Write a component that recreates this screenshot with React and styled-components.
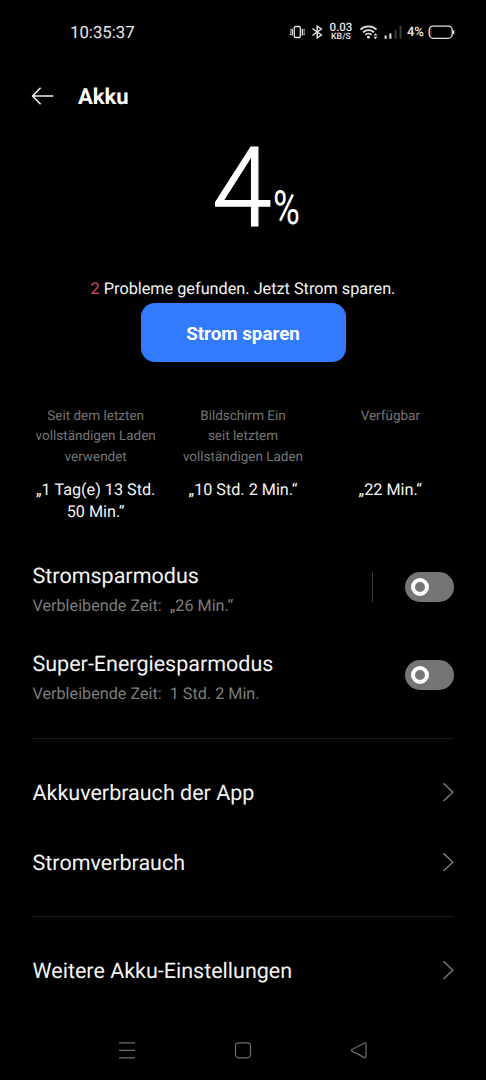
import React from 'react';
import styled, { createGlobalStyle } from 'styled-components';

const GlobalStyle = createGlobalStyle`
  * { box-sizing: border-box; }
  html, body { margin: 0; background: #000; }
  body {
    font-family: Roboto, "Liberation Sans", sans-serif;
    color: #f4f4f4;
    text-rendering: geometricPrecision;
  }
`;

const Screen = styled.div`
  width: 486px;
  height: 1080px;
  background: #000;
  display: flex;
  flex-direction: column;
  overflow: hidden;
`;

const StatusBar = styled.header`
  height: 64px;
  padding: 0 31px 0 70px;
  display: flex;
  align-items: center;
  justify-content: space-between;
`;

const Clock = styled.span`
  padding-top: 2px;
  font-size: 16.8px;
  line-height: 20px;
  color: #e8e8e8;
`;

const StatusIcons = styled.div`
  display: flex;
  align-items: center;
  svg { display: block; }
`;

const NetSpeed = styled.div`
  width: 24px;
  padding-top: 2px;
  margin: 0 6px 0 6px;
  display: flex;
  flex-direction: column;
  align-items: center;
  color: #e8e8e8;
  font-weight: 500;
  white-space: nowrap;
`;

const SpeedValue = styled.span`
  font-size: 11.5px;
  line-height: 9px;
`;

const SpeedUnit = styled.span`
  font-size: 8.8px;
  line-height: 11px;
`;

const BatteryLevel = styled.span`
  width: 18px;
  padding-top: 2px;
  margin: 0 3px 0 5px;
  font-size: 13px;
  line-height: 16px;
  font-weight: 500;
  letter-spacing: -0.2px;
  color: #e8e8e8;
`;

const TitleBar = styled.div`
  height: 64px;
  padding-left: 31px;
  display: flex;
  align-items: center;
  gap: 24px;
`;

const Title = styled.h1`
  margin: 0;
  padding-top: 3px;
  font-size: 22px;
  line-height: 28px;
  font-weight: 700;
  color: #fff;
`;

const Hero = styled.section`
  height: 234px;
  display: flex;
  flex-direction: column;
  align-items: center;
`;

const Percentage = styled.div`
  height: 146px;
  padding: 2px 0 0 35px;
  display: flex;
  align-items: baseline;
  justify-content: center;
  color: #fff;
`;

const Level = styled.span`
  font-size: 111px;
  line-height: 118px;
  font-weight: 300;
  letter-spacing: -1px;
  -webkit-text-stroke: 1.2px #fff;
  transform: scaleX(0.97);
  transform-origin: left;
`;

const PercentSign = styled.span`
  font-size: 47px;
  line-height: 48px;
  width: 36px;
  transform: translateY(-2px) scaleX(0.78);
  transform-origin: left;
`;

const Message = styled.p`
  margin: 0;
  height: 29px;
  font-size: 16.25px;
  line-height: 30px;
  white-space: nowrap;
`;

const Count = styled.span`
  color: #d04a56;
`;

const SaveButton = styled.button`
  width: 205px;
  height: 59px;
  padding: 2px 0 0;
  border: 0;
  border-radius: 14px;
  background: #327bff;
  color: #fff;
  font: 700 18.8px/24px Roboto, sans-serif;
`;

const Stats = styled.section`
  height: 181px;
  padding: 42px 22px 0;
  display: grid;
  grid-template-columns: repeat(3, 1fr);
`;

const Stat = styled.div`
  display: flex;
  flex-direction: column;
  align-items: center;
  text-align: center;
  white-space: nowrap;
`;

const StatLabel = styled.div`
  height: 75px;
  padding-top: 1.6px;
  font-size: 13.5px;
  line-height: 20.7px;
  color: #757575;
`;

const StatValue = styled.div`
  font-size: 16.2px;
  line-height: 22px;
`;

const ModeRow = styled.div`
  height: 88px;
  padding: 0 32px;
  display: flex;
  align-items: center;
`;

const ModeText = styled.div`
  flex: 1;
  padding-top: 4px;
  display: flex;
  flex-direction: column;
  gap: 2px;
`;

const RowTitle = styled.span`
  padding: 3px 0 0 0.5px;
  font-size: 21.5px;
  line-height: 28px;
  white-space: nowrap;
`;

const RowHint = styled.span`
  padding-left: 0.5px;
  font-size: 16.2px;
  line-height: 26px;
  color: #7d7d7d;
  white-space: pre;
`;

const Separator = styled.span`
  width: 1px;
  height: 30px;
  margin-right: 32px;
  background: #3a3a3a;
`;

const Toggle = styled.span`
  width: 49px;
  height: 30px;
  padding-left: 6px;
  border-radius: 15px;
  background: #757575;
  display: flex;
  align-items: center;
`;

const Knob = styled.span`
  width: 18px;
  height: 18px;
  border-radius: 50%;
  border: 4px solid #fff;
`;

const Divider = styled.hr`
  flex: none;
  width: 422px;
  height: 1px;
  margin: 19px auto 18px;
  border: 0;
  background: #1b1b1b;
`;

const LinkRow = styled.div`
  height: 70px;
  padding: 0 32px;
  display: flex;
  align-items: center;
  justify-content: space-between;
`;

const NavBar = styled.nav`
  height: 60px;
  margin-top: auto;
  padding: 0 118px;
  display: flex;
  align-items: center;
  justify-content: space-between;
`;

const VibrateIcon = () => (
  <svg width="16" height="16" viewBox="0 0 16 16" fill="none" stroke="#e4e4e4" strokeWidth="1.3">
    <rect x="5.3" y="2.5" width="6" height="11" rx="1.2" />
    <path d="M3.3 4.8v6.6M13.4 4.8v6.6M1.5 5.2v1.4M1.5 7.6v1M1.5 9.6v1.4M15.2 5.2v1.4M15.2 7.6v1M15.2 9.6v1.4" />
  </svg>
);

const BluetoothIcon = () => (
  <svg width="12" height="16" viewBox="0 0 12 16" fill="none" stroke="#e4e4e4" strokeWidth="1.4">
    <path d="M1.4 4.5 10.4 11 6.2 14V2l4.2 3-9 6.5" />
  </svg>
);

const WifiIcon = () => (
  <svg width="20" height="16" viewBox="0 0 20 16" fill="none" stroke="#e4e4e4" strokeWidth="1.7">
    <path d="M1.5 5.6a11.6 11.6 0 0 1 16 0M3.9 8.4a8.1 8.1 0 0 1 11.2 0M6.3 11a4.6 4.6 0 0 1 6.2-.2" />
    <circle cx="9.4" cy="13.2" r="1.4" fill="#e4e4e4" stroke="none" />
    <path d="M14.4 11.6l2-2.4 2 2.4zM14.4 12.8l2 2.4 2-2.4z" fill="#e4e4e4" stroke="none" />
  </svg>
);

const SignalIcon = () => (
  <svg width="19" height="16" viewBox="0 0 19 16" fill="none" strokeWidth="2">
    <path d="M2.6 14.8v-3.4M7.4 14.8V9.4" stroke="#e4e4e4" />
    <path d="M12.6 14.8V6M17.6 14.8V2" stroke="#3d3d3d" />
  </svg>
);

const BatteryIcon = () => (
  <svg width="27" height="16" viewBox="0 0 27 16" fill="none">
    <path d="M2.8 4.5v7.4" stroke="#7c3038" strokeWidth="1.2" />
    <rect x="1.2" y="2.1" width="23" height="12.2" rx="4" stroke="#e4e4e4" strokeWidth="1.3" />
    <path d="M25.7 6.2v4" stroke="#e4e4e4" strokeWidth="1.3" />
  </svg>
);

const BackIcon = () => (
  <svg width="23" height="20" viewBox="0 0 23 20" fill="none" stroke="#f0f0f0" strokeWidth="1.6">
    <path d="M22.3 10H1.8M9.6 1.8 1.6 10l8 8.2" />
  </svg>
);

const ChevronIcon = () => (
  <svg width="13" height="20" viewBox="0 0 13 20" fill="none" stroke="#787878" strokeWidth="1.5">
    <path d="M2.5 1.4 11.8 10.2 2.5 19" />
  </svg>
);

const MenuIcon = () => (
  <svg width="18" height="18" viewBox="0 0 18 18" stroke="#6c6c6c" strokeWidth="1.2">
    <path d="M1 1.9h16M1 9.4h16M1 16.9h16" />
  </svg>
);

const HomeIcon = () => (
  <svg width="18" height="18" viewBox="0 0 18 18" fill="none" stroke="#6c6c6c" strokeWidth="1.2">
    <rect x="1.5" y="1.8" width="15" height="15" rx="3.2" />
  </svg>
);

const PreviousIcon = () => (
  <svg width="18" height="18" viewBox="0 0 18 18" fill="none" stroke="#6c6c6c" strokeWidth="1.2" strokeLinejoin="round">
    <path d="M2 8.5 14.6 2Q16 1.5 16 2.9v12.8q0 1.4-1.4.9L2 10.1Q.9 9.3 2 8.5z" />
  </svg>
);

const stats = [
  { label: ['Seit dem letzten', 'vollständigen Laden', 'verwendet'], value: ['„1 Tag(e) 13 Std.', '50 Min.“'] },
  { label: ['Bildschirm Ein', 'seit letztem', 'vollständigen Laden'], value: ['„10 Std. 2 Min.“'] },
  { label: ['Verfügbar'], value: ['„22 Min.“'] },
];

const Lines = ({ items }) => items.map((line) => <div key={line}>{line}</div>);

const Mode = ({ title, hint, separated }) => (
  <ModeRow>
    <ModeText>
      <RowTitle>{title}</RowTitle>
      <RowHint>{hint}</RowHint>
    </ModeText>
    {separated && <Separator />}
    <Toggle role="switch" aria-checked="false"><Knob /></Toggle>
  </ModeRow>
);

const Link = ({ title }) => (
  <LinkRow>
    <RowTitle>{title}</RowTitle>
    <ChevronIcon />
  </LinkRow>
);

const IconGap = styled.span`
  width: ${(p) => p.$size}px;
`;

export default function App() {
  return (
    <>
      <GlobalStyle />
      <Screen>
        <StatusBar>
          <Clock>10:35:37</Clock>
          <StatusIcons>
            <VibrateIcon />
            <IconGap $size={6} />
            <BluetoothIcon />
            <NetSpeed>
              <SpeedValue>0.03</SpeedValue>
              <SpeedUnit>KB/S</SpeedUnit>
            </NetSpeed>
            <WifiIcon />
            <IconGap $size={4} />
            <SignalIcon />
            <BatteryLevel>4%</BatteryLevel>
            <BatteryIcon />
          </StatusIcons>
        </StatusBar>
        <TitleBar>
          <BackIcon />
          <Title>Akku</Title>
        </TitleBar>
        <Hero>
          <Percentage>
            <Level>4</Level>
            <PercentSign>%</PercentSign>
          </Percentage>
          <Message><Count>2</Count> Probleme gefunden. Jetzt Strom sparen.</Message>
          <SaveButton>Strom sparen</SaveButton>
        </Hero>
        <Stats>
          {stats.map((s) => (
            <Stat key={s.label[0]}>
              <StatLabel><Lines items={s.label} /></StatLabel>
              <StatValue><Lines items={s.value} /></StatValue>
            </Stat>
          ))}
        </Stats>
        <Mode title="Stromsparmodus" hint="Verbleibende Zeit:  „26 Min.“" separated />
        <Mode title="Super-Energiesparmodus" hint="Verbleibende Zeit:  1 Std. 2 Min." />
        <Divider />
        <Link title="Akkuverbrauch der App" />
        <Link title="Stromverbrauch" />
        <Divider />
        <Link title="Weitere Akku-Einstellungen" />
        <NavBar>
          <MenuIcon />
          <HomeIcon />
          <PreviousIcon />
        </NavBar>
      </Screen>
    </>
  );
}
